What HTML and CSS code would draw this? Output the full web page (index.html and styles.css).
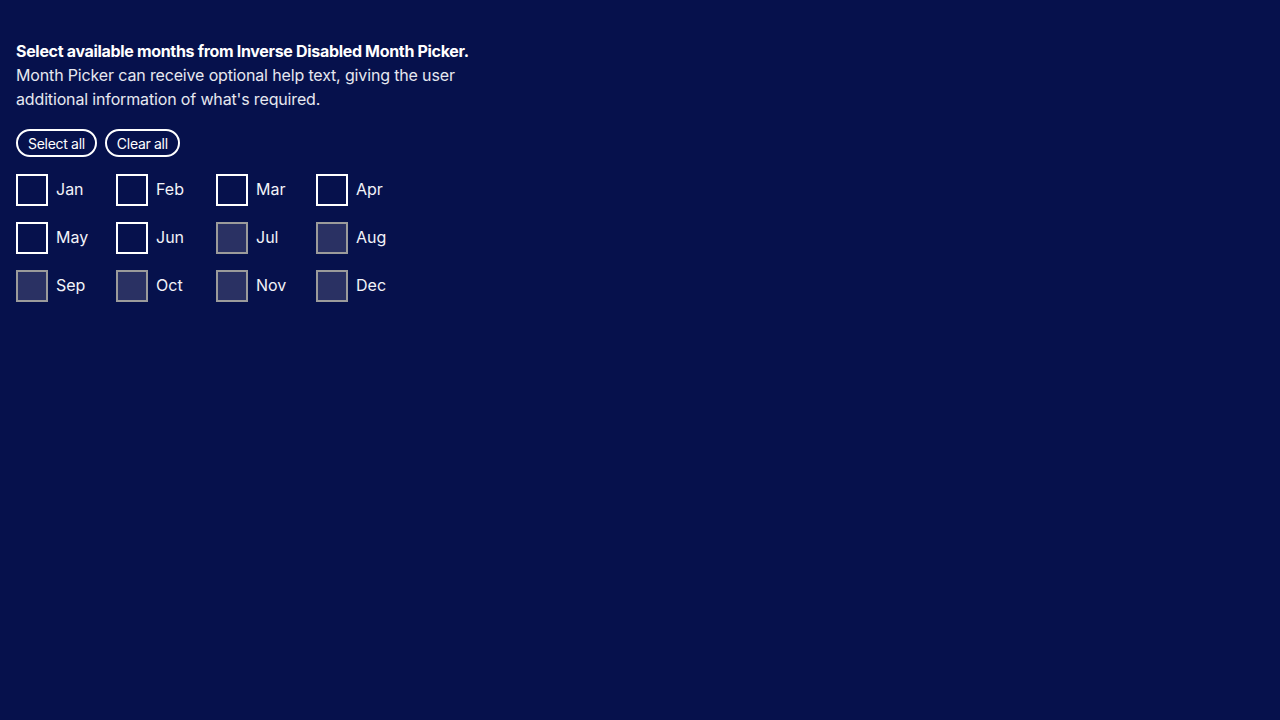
FILE: index.html
```html
<!DOCTYPE html>
<html lang="en">
<head>
<meta charset="utf-8">
<link rel="stylesheet" href="styles.css">
</head>
<body>
<div class="page">
  <fieldset class="picker">
    <legend class="title">Select available months from Inverse Disabled Month Picker.</legend>
    <p class="help">Month Picker can receive optional help text, giving the user<br>additional information of what's required.</p>
    <div class="actions">
      <button class="pill">Select all</button>
      <button class="pill">Clear all</button>
    </div>
    <div class="grid">
      <label class="month"><span class="box"></span><span class="lbl">Jan</span></label>
      <label class="month"><span class="box"></span><span class="lbl">Feb</span></label>
      <label class="month"><span class="box"></span><span class="lbl">Mar</span></label>
      <label class="month"><span class="box"></span><span class="lbl">Apr</span></label>
      <label class="month"><span class="box"></span><span class="lbl">May</span></label>
      <label class="month"><span class="box"></span><span class="lbl">Jun</span></label>
      <label class="month disabled"><span class="box"></span><span class="lbl">Jul</span></label>
      <label class="month disabled"><span class="box"></span><span class="lbl">Aug</span></label>
      <label class="month disabled"><span class="box"></span><span class="lbl">Sep</span></label>
      <label class="month disabled"><span class="box"></span><span class="lbl">Oct</span></label>
      <label class="month disabled"><span class="box"></span><span class="lbl">Nov</span></label>
      <label class="month disabled"><span class="box"></span><span class="lbl">Dec</span></label>
    </div>
  </fieldset>
</div>
</body>
</html>
```
FILE: styles.css
```css
html, body {
  margin: 0;
  padding: 0;
  background: #06114c;
  height: 100%;
}
body {
  font-family: "Inter", "Noto Sans", sans-serif;
  color: #ffffff;
}
.page {
  padding: 39px 16px 16px;
}
.picker {
  border: 0;
  margin: 0;
  padding: 0;
  min-width: 0;
}
.title {
  padding: 0;
  font-size: 16px;
  line-height: 24px;
  font-weight: 700;
  letter-spacing: -0.32px;
  float: left;
  width: 100%;
}
.help {
  clear: both;
  margin: 0;
  font-size: 16px;
  line-height: 24px;
  color: #e6e8f0;
  letter-spacing: -0.15px;
}
.actions {
  display: flex;
  gap: 8px;
  margin-top: 18px;
}
.pill {
  height: 28px;
  padding: 0 10px;
  border: 2px solid #ffffff;
  border-radius: 14px;
  background: transparent;
  color: #ffffff;
  font-family: "Inter", "Noto Sans", sans-serif;
  font-size: 14px;
  letter-spacing: -0.3px;
}
.grid {
  display: grid;
  grid-template-columns: repeat(4, 100px);
  row-gap: 16px;
  margin-top: 17px;
}
.month {
  display: flex;
  align-items: center;
  gap: 8px;
  height: 32px;
}
.box {
  box-sizing: border-box;
  width: 32px;
  height: 32px;
  border: 2px solid #ffffff;
}
.lbl {
  font-size: 16px;
  color: #f2f3f8;
  padding-bottom: 2px;
}
.disabled .box {
  background: #2a3163;
  border-color: #9b9b9b;
}
```
